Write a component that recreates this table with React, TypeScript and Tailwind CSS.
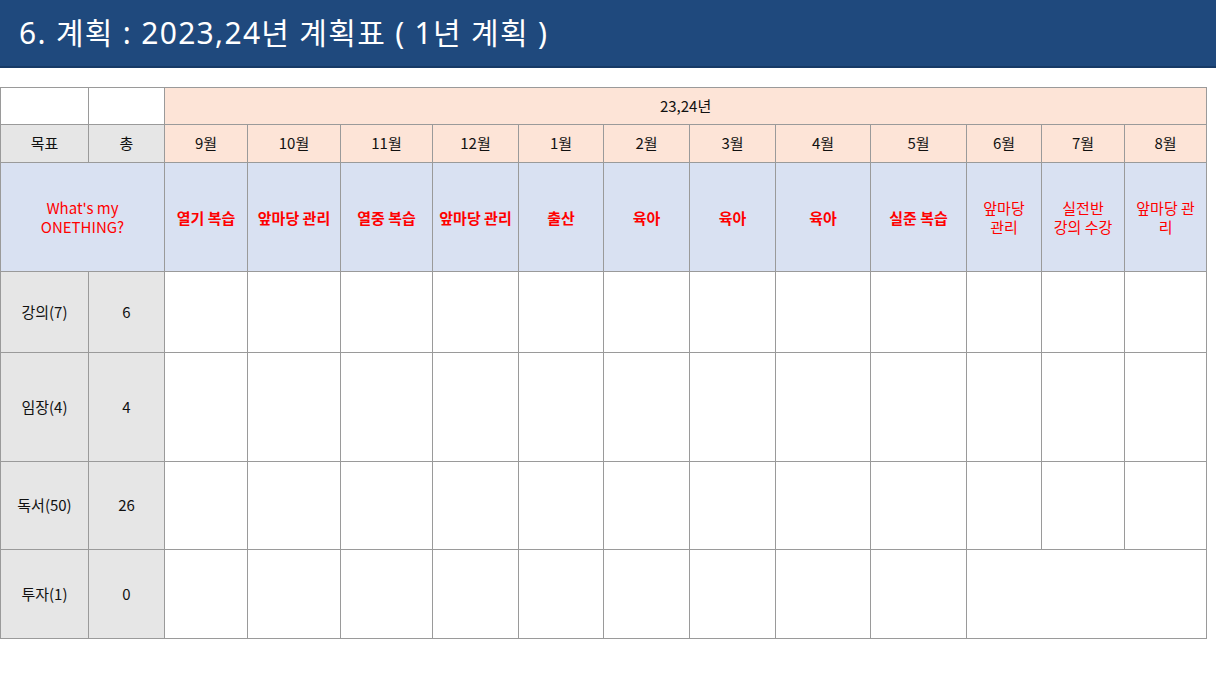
import React from "react";

const COL_WIDTHS = [88, 76, 83, 93, 92, 86, 85, 86, 86, 95, 96, 75, 83, 82];

const MONTHS = ["9월", "10월", "11월", "12월", "1월", "2월", "3월", "4월", "5월", "6월", "7월", "8월"];

// bold = single line bold label, otherwise wraps in normal weight
const GOALS: { text: string; bold: boolean }[] = [
  { text: "열기 복습", bold: true },
  { text: "앞마당 관리", bold: true },
  { text: "열중 복습", bold: true },
  { text: "앞마당 관리", bold: true },
  { text: "출산", bold: true },
  { text: "육아", bold: true },
  { text: "육아", bold: true },
  { text: "육아", bold: true },
  { text: "실준 복습", bold: true },
  { text: "앞마당\n관리", bold: false },
  { text: "실전반\n강의 수강", bold: false },
  { text: "앞마당 관\n리", bold: false },
];

const ROWS = [
  { label: "강의(7)", total: "6", h: "h-[81px]" },
  { label: "임장(4)", total: "4", h: "h-[109px]" },
  { label: "독서(50)", total: "26", h: "h-[88px]" },
  { label: "투자(1)", total: "0", h: "h-[89px]" },
];

const cell = "border border-[#9a9a9a] text-center align-middle p-0";

export default function App() {
  return (
    <div
      className="w-[1216px] h-[684px] bg-white overflow-hidden"
      style={{ fontFamily: '"Noto Sans CJK KR", "Noto Sans", sans-serif' }}
    >
      <header className="h-[68px] bg-[#1f497d] border-b-2 border-[#173a66] flex items-center pl-[19px]">
        <h1
          className="text-white text-[30px] leading-none tracking-[1.3px] font-normal"
          style={{ fontFamily: '"Noto Sans", "Noto Sans CJK KR", sans-serif' }}
        >
          6. 계획 : 2023,24년 계획표 ( 1년 계획 )
        </h1>
      </header>

      <div className="pt-[19px]">
        <table className="table-fixed border-collapse w-[1206px] text-[15px] text-[#111]">
          <colgroup>
            {COL_WIDTHS.map((w, i) => (
              <col key={i} style={{ width: w }} />
            ))}
          </colgroup>
          <tbody>
            <tr className="h-[37px]">
              <td className={`${cell} bg-white`} />
              <td className={`${cell} bg-white`} />
              <td className={`${cell} bg-[#fde4d7]`} colSpan={12}>
                23,24년
              </td>
            </tr>
            <tr className="h-[38px]">
              <td className={`${cell} bg-[#e6e6e6]`}>목표</td>
              <td className={`${cell} bg-[#e6e6e6]`}>총</td>
              {MONTHS.map((m) => (
                <td key={m} className={`${cell} bg-[#fde4d7]`}>
                  {m}
                </td>
              ))}
            </tr>
            <tr className="h-[109px]">
              <td className={`${cell} bg-[#d9e1f2] text-[#ff0000] leading-[19px] px-3`} colSpan={2}>
                What's my ONETHING?
              </td>
              {GOALS.map((g, i) => (
                <td
                  key={i}
                  className={`${cell} bg-[#d9e1f2] text-[#ff0000] whitespace-pre-line leading-[19px] ${
                    g.bold ? "font-bold" : "font-normal"
                  }`}
                >
                  {g.text}
                </td>
              ))}
            </tr>
            {ROWS.map((r, ri) => (
              <tr key={r.label} className={r.h}>
                <td className={`${cell} bg-[#e6e6e6]`}>{r.label}</td>
                <td className={`${cell} bg-[#e6e6e6]`}>{r.total}</td>
                {ri === ROWS.length - 1 ? (
                  <>
                    {Array.from({ length: 9 }).map((_, i) => (
                      <td key={i} className={`${cell} bg-white`} />
                    ))}
                    <td className={`${cell} bg-white`} colSpan={3} />
                  </>
                ) : (
                  Array.from({ length: 12 }).map((_, i) => (
                    <td key={i} className={`${cell} bg-white`} />
                  ))
                )}
              </tr>
            ))}
          </tbody>
        </table>
      </div>
    </div>
  );
}
